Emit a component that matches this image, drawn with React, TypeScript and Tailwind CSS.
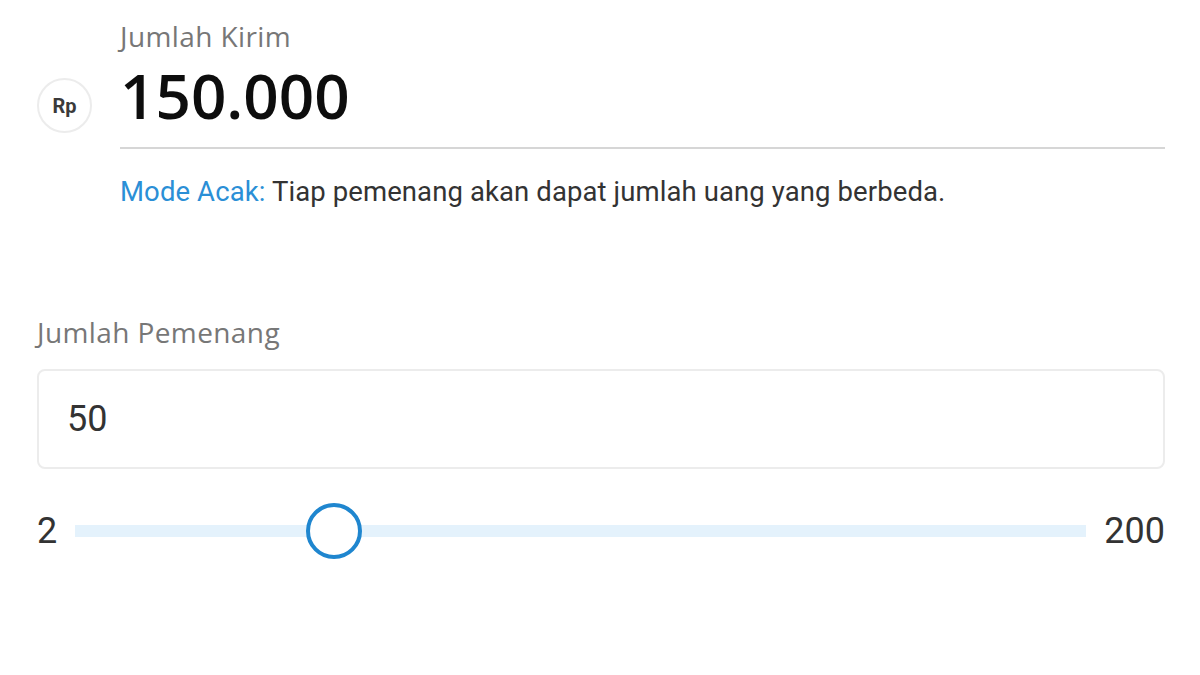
import { useState } from 'react';

const MIN = 2;
const MAX = 200;

export default function App() {
  const [amount] = useState('150.000');
  const [winners] = useState(50);

  // posisi thumb di track (disesuaikan dengan tampilan)
  const pct = 25.6;

  return (
    <div className="w-[1200px] h-[675px] bg-white pl-[37px] pr-[35px] pt-[20px] overflow-hidden">
      {/* Jumlah Kirim */}
      <div className="flex">
        <div className="w-[83px] shrink-0 pt-[58px]">
          <div className="w-[55px] h-[55px] rounded-full border-2 border-[#ececec] flex items-center justify-center">
            <span className="font-['Roboto',sans-serif] font-bold text-[20px] text-[#3a3a3a]">
              Rp
            </span>
          </div>
        </div>
        <div className="flex-1">
          <div className="font-['Open_Sans',sans-serif] text-[28px] leading-[32px] tracking-[0.4px] text-[#777777]">
            Jumlah Kirim
          </div>
          <div className="mt-[7px] font-['Open_Sans',sans-serif] font-semibold text-[62px] leading-[72px] text-[#0d0d0d]">
            {amount}
          </div>
          <div className="mt-[16px] h-[2px] bg-[#d6d6d6]" />
          <p className="mt-[28px] font-['Roboto',sans-serif] text-[27.5px] leading-[30px] tracking-[0.1px] text-[#333333]">
            <span className="text-[#2b8fd6]">Mode Acak:</span> Tiap pemenang akan dapat jumlah uang yang berbeda.
          </p>
        </div>
      </div>

      {/* Jumlah Pemenang */}
      <div className="mt-[109px] font-['Open_Sans',sans-serif] text-[28px] leading-[32px] tracking-[0.4px] text-[#777777]">
        Jumlah Pemenang
      </div>
      <div className="mt-[21px] h-[100px] rounded-[8px] border-2 border-[#ececec] flex items-center pl-[28px]">
        <span className="font-['Roboto',sans-serif] text-[36px] leading-none text-[#333333]">{winners}</span>
      </div>

      {/* slider */}
      <div className="mt-[34px] flex items-center h-[56px]">
        <span className="w-[38px] font-['Roboto',sans-serif] text-[36px] leading-none text-[#333333]">{MIN}</span>
        <div className="relative flex-1 h-[12px] bg-[#e4f2fc]">
          <div
            className="absolute top-1/2 w-[56px] h-[56px] -translate-x-1/2 -translate-y-1/2 rounded-full border-4 border-[#1f86cf] bg-white"
            style={{ left: `${pct}%` }}
          />
        </div>
        <span className="ml-[18px] font-['Roboto',sans-serif] text-[36px] leading-none text-[#333333]">{MAX}</span>
      </div>
    </div>
  );
}
